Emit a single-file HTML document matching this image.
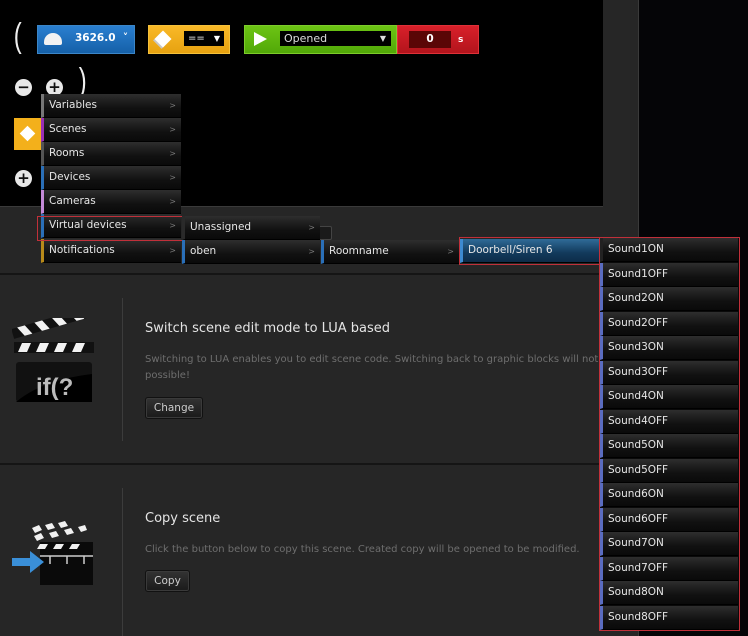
<!DOCTYPE html>
<html><head><meta charset="utf-8"><style>
*{margin:0;padding:0;box-sizing:border-box}
body{width:748px;height:636px;overflow:hidden;background:#050507;font-family:"DejaVu Sans","Liberation Sans",sans-serif;position:relative}
.a{position:absolute}
.mi{position:absolute;height:24px;background:linear-gradient(#2e2e2e,#111 60%,#0a0a0a);color:#e6e6e6;font-size:10.5px;line-height:22px;padding-left:5px;border-left:3px solid #555;border-bottom:1px solid #000}
.mi .ar{position:absolute;right:5px;top:1px;color:#777;font-size:8px}
.btn{position:absolute;height:22px;border:1px solid #111;border-radius:3px;background:linear-gradient(#333,#1a1a1a);color:#ccc;font-size:10.5px;line-height:20px;text-align:center;box-shadow:0 0 0 1px #3a3a3a inset}
.circ{position:absolute;width:17px;height:17px;border-radius:50%;background:#e8e8e8;color:#111;font-weight:bold;font-size:15px;line-height:16px;text-align:center}
</style></head><body>
<div class="a" style="left:0;top:0;width:639px;height:636px;background:#262626;border-right:1px solid #3a3a3a"></div>
<div class="a" style="left:0;top:0;width:603px;height:207px;background:#000;border-bottom:1px solid #3a3a3a"></div>
<div class="a" style="left:0;top:273px;width:639px;height:2px;background:#151515"></div>
<div class="a" style="left:0;top:463px;width:639px;height:2px;background:#151515"></div>
<div class="a" style="left:122px;top:298px;width:1px;height:143px;background:#3c3c3c"></div>
<div class="a" style="left:122px;top:488px;width:1px;height:148px;background:#3c3c3c"></div>

<div class="a" style="left:12px;top:17px;color:#eee;font-size:34px;font-family:'Liberation Sans',sans-serif;transform:scaleX(.7)">(</div>
<div class="a" style="left:77px;top:62px;color:#eee;font-size:34px;font-family:'Liberation Sans',sans-serif;transform:scaleX(.7)">)</div>
<div class="a" style="left:37px;top:25px;width:98px;height:29px;background:linear-gradient(#2a7fd0,#1560a8);border:1px solid #3b86c8"></div>
<div class="a" style="left:44px;top:33px;width:18px;height:12px;background:#f2f2f2;border-radius:9px 9px 2px 2px"></div>
<div class="a" style="left:75px;top:32px;color:#fff;font-size:10.5px;font-weight:bold">3626.0 &nbsp;˅</div>
<div class="a" style="left:148px;top:25px;width:82px;height:29px;background:linear-gradient(#f9b928,#e7a210);border:1px solid #f5c13a"></div>
<div class="a" style="left:157px;top:33px;width:12px;height:12px;background:#fff;transform:rotate(45deg);box-shadow:0 2px 0 #c8c8c8"></div>
<div class="a" style="left:184px;top:31px;width:40px;height:15px;background:#000;color:#fff;font-size:10px;line-height:15px;padding-left:4px">== <span style="font-size:8px;position:absolute;right:4px">▼</span></div>
<div class="a" style="left:244px;top:25px;width:153px;height:29px;background:linear-gradient(#6cc414,#52a808);border:1px solid #7dcc2a"></div>
<div class="a" style="left:254px;top:32px;width:0;height:0;border-left:13px solid #fff;border-top:7px solid transparent;border-bottom:7px solid transparent"></div>
<div class="a" style="left:280px;top:31px;width:111px;height:15px;background:#000;color:#ddd;font-size:11px;line-height:15px;padding-left:4px">Opened<span style="font-size:8px;position:absolute;right:5px">▼</span></div>
<div class="a" style="left:397px;top:25px;width:82px;height:29px;background:linear-gradient(#d8202a,#b3141c);border:1px solid #e03038"></div>
<div class="a" style="left:409px;top:31px;width:42px;height:17px;background:#5a0606;color:#fff;font-size:10.5px;line-height:17px;text-align:center;font-weight:bold">0</div>
<div class="a" style="left:458px;top:35px;color:#fff;font-size:9px;font-weight:bold">s</div>
<div class="circ" style="left:15px;top:79px">−</div>
<div class="circ" style="left:46px;top:79px">+</div>
<div class="a" style="left:14px;top:118px;width:28px;height:32px;background:#f3b01b"></div>
<div class="a" style="left:22px;top:128px;width:11px;height:11px;background:#fff;transform:rotate(45deg)"></div>
<div class="circ" style="left:15px;top:170px">+</div>

<div class="mi" style="left:41px;top:94px;width:140px;border-left-color:#777">Variables<span class="ar">&gt;</span></div>
<div class="mi" style="left:41px;top:118px;width:140px;border-left-color:#9b2fb5">Scenes<span class="ar">&gt;</span></div>
<div class="mi" style="left:41px;top:142px;width:140px;border-left-color:#555">Rooms<span class="ar">&gt;</span></div>
<div class="mi" style="left:41px;top:166px;width:140px;border-left-color:#2a6fb8">Devices<span class="ar">&gt;</span></div>
<div class="mi" style="left:41px;top:190px;width:140px;border-left-color:#c48ad8">Cameras<span class="ar">&gt;</span></div>
<div class="mi" style="left:41px;top:214px;width:140px;border-left-color:#2a6fb8">Virtual devices<span class="ar">&gt;</span></div>
<div class="mi" style="left:41px;top:239px;width:140px;border-left-color:#b88a1a">Notifications<span class="ar">&gt;</span></div>
<div class="a" style="left:37px;top:216px;width:147px;height:25px;border:1px solid #c0303a"></div>
<div class="a" style="left:318px;top:226px;width:14px;height:14px;background:#1a1a1a;border:1px solid #444;border-radius:2px"></div>
<div class="mi" style="left:182px;top:216px;width:138px;border-left-color:#2a2a2a">Unassigned<span class="ar">&gt;</span></div>
<div class="mi" style="left:182px;top:240px;width:138px;border-left-color:#2a6fb8">oben<span class="ar">&gt;</span></div>
<div class="mi" style="left:321px;top:240px;width:138px;border-left-color:#2a6fb8">Roomname<span class="ar">&gt;</span></div>
<div class="mi" style="left:460px;top:239px;width:140px;background:linear-gradient(#2f6b98,#123a5c 60%,#0d2c48);border-left-color:#3d8ad0">Doorbell/Siren 6</div>
<div class="a" style="left:459px;top:237px;width:142px;height:28px;border:1px solid #c0303a"></div>
<div class="a" style="left:599px;top:237px;width:141px;height:394px;border:1px solid #c0303a;background:#0a0a0a"></div>
<div class="mi" style="left:600px;top:238px;width:138px;border-left-color:#222">Sound1ON</div>
<div class="mi" style="left:600px;top:262.5px;width:138px;border-left-color:#5a6cc0">Sound1OFF</div>
<div class="mi" style="left:600px;top:287px;width:138px;border-left-color:#5a6cc0">Sound2ON</div>
<div class="mi" style="left:600px;top:311.5px;width:138px;border-left-color:#5a6cc0">Sound2OFF</div>
<div class="mi" style="left:600px;top:336px;width:138px;border-left-color:#5a6cc0">Sound3ON</div>
<div class="mi" style="left:600px;top:360.5px;width:138px;border-left-color:#5a6cc0">Sound3OFF</div>
<div class="mi" style="left:600px;top:385px;width:138px;border-left-color:#5a6cc0">Sound4ON</div>
<div class="mi" style="left:600px;top:409.5px;width:138px;border-left-color:#5a6cc0">Sound4OFF</div>
<div class="mi" style="left:600px;top:434px;width:138px;border-left-color:#5a6cc0">Sound5ON</div>
<div class="mi" style="left:600px;top:458.5px;width:138px;border-left-color:#5a6cc0">Sound5OFF</div>
<div class="mi" style="left:600px;top:483px;width:138px;border-left-color:#5a6cc0">Sound6ON</div>
<div class="mi" style="left:600px;top:507.5px;width:138px;border-left-color:#5a6cc0">Sound6OFF</div>
<div class="mi" style="left:600px;top:532px;width:138px;border-left-color:#5a6cc0">Sound7ON</div>
<div class="mi" style="left:600px;top:556.5px;width:138px;border-left-color:#5a6cc0">Sound7OFF</div>
<div class="mi" style="left:600px;top:581px;width:138px;border-left-color:#5a6cc0">Sound8ON</div>
<div class="mi" style="left:600px;top:605.5px;width:138px;border-left-color:#5a6cc0">Sound8OFF</div>

<svg class="a" style="left:12px;top:318px" width="84" height="88" viewBox="0 0 84 88">
<rect x="4" y="44" width="76" height="40" rx="3" fill="#111"/>
<path d="M4 84 Q30 62 80 56 L80 84Z" fill="#000"/>
<rect x="2" y="24" width="80" height="11" fill="#111"/>
<path d="M10 25h9l-4 9h-9zM28 25h9l-4 9h-9zM46 25h9l-4 9h-9zM64 25h9l-4 9h-9z" fill="#f2f2f2"/>
<g transform="rotate(-16 5 20)"><rect x="2" y="10" width="82" height="10" fill="#111"/>
<path d="M8 10h8l5 10h-8zM26 10h8l5 10h-8zM44 10h8l5 10h-8zM62 10h8l5 10h-8z" fill="#f2f2f2"/></g>
<text x="24" y="77" fill="#bbb" font-size="24" font-weight="bold" font-family="Liberation Sans,sans-serif">if(?</text>
</svg>
<div class="a" style="left:145px;top:321px;color:#e4e4e4;font-size:13px">Switch scene edit mode to LUA based</div>
<div class="a" style="left:145px;top:352px;width:455px;color:#6e6e6e;font-size:10px;line-height:16px">Switching to LUA enables you to edit scene code. Switching back to graphic blocks will not possible!</div>
<div class="btn" style="left:145px;top:397px;width:58px">Change</div>

<svg class="a" style="left:12px;top:520px" width="84" height="66" viewBox="0 0 84 66">
<rect x="28" y="22" width="53" height="43" fill="#0a0a0a"/>
<path d="M28 36h53M38 36v8M55 36v8M72 36v8" stroke="#ccc" stroke-width="1.5"/>
<g fill="#f0f0f0"><path d="M20 8l7-3 3 5-7 3zM33 5l7-2 3 5-7 2zM46 3l7-2 3 5-7 2z"/>
<path d="M22 16l7-3 3 5-7 3zM37 13l7-2 3 5-7 2zM52 10l7-2 3 5-7 2zM66 7l7-2 2 5-6 2z"/>
<path d="M28 24h8l-3 5h-8zM44 24h8l-3 5h-8zM60 24h8l-3 5h-8z"/></g>
<path d="M0 38h18v-7l14 11-14 11v-7h-18z" fill="#3a8fd8"/>
</svg>
<div class="a" style="left:145px;top:511px;color:#e4e4e4;font-size:13px">Copy scene</div>
<div class="a" style="left:145px;top:542px;color:#6e6e6e;font-size:10px;line-height:16px">Click the button below to copy this scene. Created copy will be opened to be modified.</div>
<div class="btn" style="left:145px;top:570px;width:45px">Copy</div>
</body></html>
